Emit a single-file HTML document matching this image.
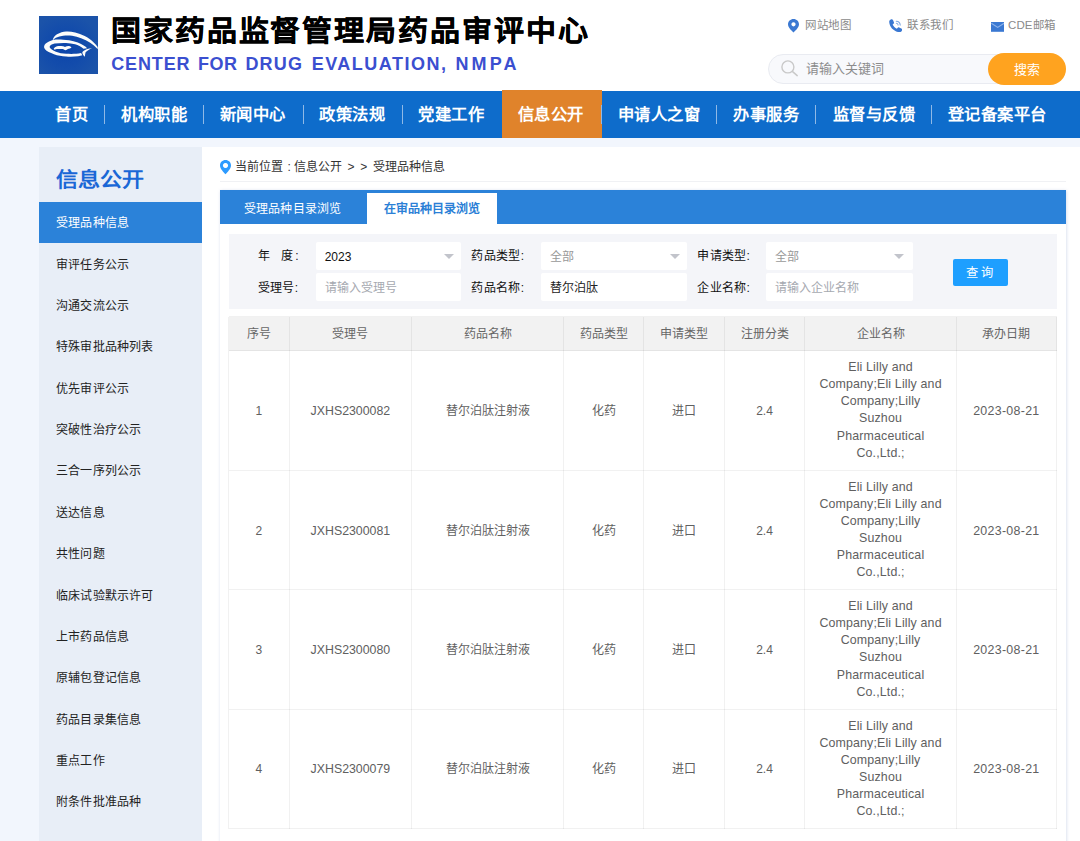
<!DOCTYPE html>
<html lang="zh-CN">
<head>
<meta charset="utf-8">
<title>CDE</title>
<style>
*{margin:0;padding:0;box-sizing:border-box;}
html,body{width:1080px;height:841px;overflow:hidden;}
body{position:relative;background:#f2f6fd;font-family:"Liberation Sans",sans-serif;font-size:12px;color:#333;}
.abs{position:absolute;white-space:nowrap;}
#hdr{position:absolute;left:0;top:0;width:1080px;height:91px;background:#fff;}
#logo{position:absolute;left:39px;top:16px;width:59px;height:58px;background:#1a50a8;}
#t1{left:111px;top:9.5px;font-size:30px;line-height:44px;font-weight:bold;color:#000;letter-spacing:1.9px;-webkit-text-stroke:0.4px #000;transform:scale(1,0.95);transform-origin:0 7.5px;}
#t2{left:111px;top:52.2px;font-size:18px;line-height:24px;font-weight:bold;color:#3b4fd0;letter-spacing:1.55px;word-spacing:4.2px;}
.tl{font-size:11.5px;letter-spacing:0.5px;line-height:16px;color:#8a8a8a;top:17px;}
#sbox{position:absolute;left:768px;top:54px;width:296px;height:30px;border-radius:15px;background:#f8f9fc;border:1px solid #e9ebf1;}
#sbtn{position:absolute;left:988px;top:53px;width:78px;height:32px;border-radius:16px;background:#ffa31f;color:#fff;font-size:13px;line-height:34px;text-align:center;}
#sph{left:806px;top:59.5px;font-size:13px;line-height:18px;color:#8c8c8c;}
#nav{position:absolute;left:0;top:91px;width:1080px;height:47px;background:#0e6ccb;}
.ni{position:absolute;top:0;height:47px;line-height:47px;font-size:16.3px;letter-spacing:0.5px;font-weight:bold;color:#fff;white-space:nowrap;}
.ns{position:absolute;top:14px;width:1px;height:19px;background:#8fb9e6;}
#nact{position:absolute;left:502px;top:-1px;width:99.5px;height:48px;background:#e0832b;}
#side{position:absolute;left:39px;top:147px;width:163px;height:694px;background:#e8eef7;}
#stitle{left:17px;top:17px;font-size:22px;line-height:32px;font-weight:bold;color:#1a67d6;transform:scale(1,0.91);transform-origin:0 26px;}
#sact{position:absolute;left:0;top:54.5px;width:163px;height:41.3px;background:#2b82d9;}
.si{left:17px;font-size:12px;letter-spacing:0.17px;line-height:16px;color:#222;}
#main{position:absolute;left:202px;top:147px;width:878px;height:694px;background:#fff;}

#bc{left:33px;top:12px;font-size:12px;line-height:16px;color:#333;}
#bcl{position:absolute;left:18px;top:33.5px;width:846px;height:1px;background:#f0f1f4;}
#panel{position:absolute;left:18px;top:43px;width:846px;height:670px;background:#fff;box-shadow:0 0 3px 0.5px rgba(150,168,210,0.42);}
#tabs{position:absolute;left:18px;top:43px;width:846px;height:34px;background:#2b82d9;}
#tab1{left:42px;top:54px;font-size:12px;letter-spacing:0.15px;line-height:16px;color:#fff;}
#tabw{position:absolute;left:165px;top:46px;width:130px;height:31px;background:#fff;}
#tab2{left:181.5px;top:54px;font-size:12px;letter-spacing:0.05px;line-height:16px;color:#2b7fd6;font-weight:bold;}
#filt{position:absolute;left:26.5px;top:86.5px;width:828px;height:75px;background:#f4f5f9;}
.inp{position:absolute;width:147px;height:27.6px;background:#fff;border-radius:2px;}
.lb{font-size:12px;letter-spacing:0.35px;line-height:16px;color:#111;}
.iv{font-size:12px;line-height:16px;}
.arr{position:absolute;width:0;height:0;border-left:5px solid transparent;border-right:5px solid transparent;border-top:5px solid #c2c4cb;}
#qbtn{position:absolute;left:751px;top:112px;width:54.8px;height:27px;background:#1e9fff;border-radius:2px;color:#fff;font-size:12.3px;line-height:29.6px;text-align:center;letter-spacing:2.6px;text-indent:0.6px;}
#thead{position:absolute;left:26.5px;top:169.5px;width:828px;height:34.5px;background:#f2f2f2;}
.vl{position:absolute;top:169.5px;width:1px;height:512px;background:rgba(0,0,0,0.055);}
.hl{position:absolute;left:26.5px;width:828px;height:1px;background:rgba(0,0,0,0.055);}
.th{position:absolute;top:179.3px;font-size:12px;line-height:16px;color:#666;text-align:center;white-space:nowrap;}
.td{position:absolute;font-size:12px;line-height:16px;color:#606060;text-align:center;white-space:nowrap;}
.co{position:absolute;font-size:12.4px;letter-spacing:0.15px;line-height:17.1px;color:#606060;text-align:center;white-space:nowrap;}
</style>
</head>
<body>
<div id="hdr">
  <div id="logo"><svg width="70" height="58" viewBox="0 0 70 57.5" style="position:absolute;left:0;top:0;overflow:visible">
<defs><radialGradient id="lg" cx="45%" cy="55%" r="60%"><stop offset="0" stop-color="#0c45aa"/><stop offset="0.55" stop-color="#134cab"/><stop offset="1" stop-color="#1b53a9"/></radialGradient><filter id="hb" x="-20%" y="-20%" width="140%" height="140%"><feGaussia<g clip-path="url(#lc)"><g filter="url(#hb)" fill="#0636a6" stroke="#0636a6" stroke-width="2.6" opacity="0.85"><ellipse cx="26.5" cy="32.3" rx="17" ry="6"/>
<path d="M13.7,23.5 C14.5,21 16,19.2 18,18 C21,16.2 24,15.4 27.1,15.2 C30,15 33,15.4 36.1,16.2 C39.5,17 42.5,18.2 45.7,19.8 C49,21.5 51.8,23.6 54.2,25.8 C56,27.4 57.5,29 58.7,30.7 L58.7,33 C58.4,32.6 58.1,32.2 57.8,31.9 C55.8,29.8 53.6,28 51.2,26.4 C48.4,24.6 45.4,23.1 42.1,21.9 C39.2,20.8 36.2,19.9 33.1,19.5 C30.1,19.2 27.1,19.2 24.1,19.5 C21.6,19.9 19.2,20.6 16.9,21.6 C15.8,22.1 14.9,22.8 14.1,23.8 Z"/>
<path d="M13.8,23.7 C17,23.3 20.5,23.3 24.1,23.5 C26,23.6 28,23.7 30.1,24 C33,24.5 36,25.3 38.8,26.3 C41,27.2 43.2,28.3 45.1,29.5 C46.2,30.2 47.2,31 48.1,31.9 L44.5,32.6 C42,30.4 39.2,29 36.1,28 C33.2,27.2 30.2,26.8 27.1,26.7 C23.2,26.6 19.3,26.7 15.6,27.3 C13.5,27.8 11.6,28.7 10.8,30 C10.5,30.5 10.6,30.9 10.8,31.3 C11.8,33 14,34.4 16.9,35.5 C20,36.7 23.5,37.3 27.1,37.6 C30.5,37.8 34,37.8 37.3,37.6 C39,37.4 40.6,37.1 42.1,36.7 L43.3,39.1 C42,39.5 40.6,39.8 39.1,40 C35.2,40.5 31.2,40.6 27.1,40.3 C22.8,40 18.8,39.3 15,37.9 C11.2,36.6 7.6,35 6,33 C5.2,32 4.9,31 5.1,30 C5.5,28 7.5,26.3 10,25.2 C11.2,24.6 12.5,24 13.8,23.7 Z"/>
<path d="M53.2,32.1 C51.5,32.2 49.7,32.4 48.1,32.8 C46,33.6 44.2,34.7 43.3,36 C43.4,37.8 44.3,39.3 45.9,40.5 C46,38.9 46.1,37.4 46.6,36 C47.4,34.9 48.6,34.1 50,33.4 C51,32.9 52.1,32.5 53.2,32.1 Z"/>
<path d="M14.7,32.6 C15.3,31.3 16.5,30.4 18,30 C20,29.6 22,29.7 24,30 C24.8,30.2 25.4,30.5 25.9,30.8 C27.2,30.1 28.6,29.7 30.1,29.8 C31.2,30 32,30.6 32.5,31.4 C31.4,32 30.2,32.5 28.9,32.8 C28.2,33.5 27.4,34 26.5,34 C25.6,33.7 24.8,33.3 24,32.8 C22,32.6 20,32.6 18,32.8 C17.2,32.9 16.4,33.2 15.6,33.5 Z"/>
</g></g>
nBlur stdDeviation="1.1"/></filter><clipPath id="lc"><rect x="0" y="0" width="58.7" height="57.5"/></clipPath></defs>
<rect x="0" y="0" width="58.7" height="57.5" fill="url(#lg)"/>
<g fill="#fcfcfa">
<path d="M13.7,23.5 C14.5,21 16,19.2 18,18 C21,16.2 24,15.4 27.1,15.2 C30,15 33,15.4 36.1,16.2 C39.5,17 42.5,18.2 45.7,19.8 C49,21.5 51.8,23.6 54.2,25.8 C56,27.4 57.5,29 58.7,30.7 L58.7,33 C58.4,32.6 58.1,32.2 57.8,31.9 C55.8,29.8 53.6,28 51.2,26.4 C48.4,24.6 45.4,23.1 42.1,21.9 C39.2,20.8 36.2,19.9 33.1,19.5 C30.1,19.2 27.1,19.2 24.1,19.5 C21.6,19.9 19.2,20.6 16.9,21.6 C15.8,22.1 14.9,22.8 14.1,23.8 Z"/>
<path d="M13.8,23.7 C17,23.3 20.5,23.3 24.1,23.5 C26,23.6 28,23.7 30.1,24 C33,24.5 36,25.3 38.8,26.3 C41,27.2 43.2,28.3 45.1,29.5 C46.2,30.2 47.2,31 48.1,31.9 L44.5,32.6 C42,30.4 39.2,29 36.1,28 C33.2,27.2 30.2,26.8 27.1,26.7 C23.2,26.6 19.3,26.7 15.6,27.3 C13.5,27.8 11.6,28.7 10.8,30 C10.5,30.5 10.6,30.9 10.8,31.3 C11.8,33 14,34.4 16.9,35.5 C20,36.7 23.5,37.3 27.1,37.6 C30.5,37.8 34,37.8 37.3,37.6 C39,37.4 40.6,37.1 42.1,36.7 L43.3,39.1 C42,39.5 40.6,39.8 39.1,40 C35.2,40.5 31.2,40.6 27.1,40.3 C22.8,40 18.8,39.3 15,37.9 C11.2,36.6 7.6,35 6,33 C5.2,32 4.9,31 5.1,30 C5.5,28 7.5,26.3 10,25.2 C11.2,24.6 12.5,24 13.8,23.7 Z"/>
<path d="M53.2,32.1 C51.5,32.2 49.7,32.4 48.1,32.8 C46,33.6 44.2,34.7 43.3,36 C43.4,37.8 44.3,39.3 45.9,40.5 C46,38.9 46.1,37.4 46.6,36 C47.4,34.9 48.6,34.1 50,33.4 C51,32.9 52.1,32.5 53.2,32.1 Z"/>
<path d="M14.7,32.6 C15.3,31.3 16.5,30.4 18,30 C20,29.6 22,29.7 24,30 C24.8,30.2 25.4,30.5 25.9,30.8 C27.2,30.1 28.6,29.7 30.1,29.8 C31.2,30 32,30.6 32.5,31.4 C31.4,32 30.2,32.5 28.9,32.8 C28.2,33.5 27.4,34 26.5,34 C25.6,33.7 24.8,33.3 24,32.8 C22,32.6 20,32.6 18,32.8 C17.2,32.9 16.4,33.2 15.6,33.5 Z"/>
</g>
</svg></div>
  <div id="t1" class="abs">国家药品监督管理局药品审评中心</div>
  <div id="t2" class="abs" style="left:0;letter-spacing:0;word-spacing:0"><span class="abs" style="left:111.2px;letter-spacing:0.88px">CENTER</span><span class="abs" style="left:197.9px;letter-spacing:0.57px">FOR</span><span class="abs" style="left:245.4px;letter-spacing:1.21px">DRUG</span><span class="abs" style="left:311.7px;letter-spacing:1.49px">EVALUATION,</span><span class="abs" style="left:455.4px;letter-spacing:3.15px">NMPA</span></div>
  <div class="abs tl" style="left:805px">网站地图</div>
  <div class="abs tl" style="left:907px">联系我们</div>
  <div class="abs tl" style="left:1008px;letter-spacing:0.1px">CDE邮箱</div>
  <div id="sbox"></div>
  <svg class="abs" style="left:787.5px;top:18.5px" width="11" height="14" viewBox="0 0 11 14"><path d="M5.5,0 C2.4,0 0,2.4 0,5.3 C0,8.6 3.6,11.6 5.5,13.6 C7.4,11.6 11,8.6 11,5.3 C11,2.4 8.6,0 5.5,0 Z M5.5,3.2 A2.1,2.1 0 1 1 5.49,3.2 Z" fill="#3a78d2" fill-rule="evenodd"/></svg>
  <svg class="abs" style="left:889px;top:19px" width="13.4" height="13.4" viewBox="0 0 13.4 13.4"><path d="M2.2,0.3 C3,0 3.6,0.3 4,1.1 L4.9,3.2 C5.2,3.9 5,4.4 4.4,4.9 L3.6,5.5 C4.5,7.4 6,8.9 7.9,9.8 L8.5,9 C9,8.4 9.5,8.2 10.2,8.5 L12.3,9.4 C13.1,9.8 13.4,10.4 13.1,11.2 C12.6,12.5 11.6,13.3 10.3,13.2 C5,12.8 0.6,8.4 0.2,3.1 C0.1,1.8 0.9,0.8 2.2,0.3 Z" fill="#3a78d2"/><path d="M7.3,2.2 C9.5,2.3 11.1,3.9 11.2,6.1 M7.4,4.3 C8.4,4.4 9,5 9.1,6" stroke="#7fa8e2" stroke-width="1.1" fill="none" stroke-linecap="round"/></svg>
  <svg class="abs" style="left:990.6px;top:21.8px" width="13.4" height="9.8" viewBox="0 0 13.4 9.8"><rect width="13.4" height="9.8" fill="#3a78d2"/><path d="M0.3,1.2 L6.7,5.4 L13.1,1.2" stroke="#8db2ea" stroke-width="1.2" fill="none"/></svg>
  <svg class="abs" style="left:780px;top:58.5px" width="20" height="19" viewBox="0 0 20 19"><circle cx="7.9" cy="7.9" r="6" stroke="#c9c9c9" stroke-width="1.4" fill="none"/><path d="M12.6,12.6 L17.2,16.6" stroke="#c9c9c9" stroke-width="1.5" stroke-linecap="round"/></svg>
  <div id="sph" class="abs">请输入关键词</div>
  <div id="sbtn">搜索</div>
</div>
<div id="nav">
  <div id="nact"></div>
  <div class="ns" style="left:104px"></div>
  <div class="ns" style="left:203px"></div>
  <div class="ns" style="left:303px"></div>
  <div class="ns" style="left:402px"></div>
  <div class="ns" style="left:601px"></div>
  <div class="ns" style="left:716px"></div>
  <div class="ns" style="left:815px"></div>
  <div class="ns" style="left:931px"></div>
  <div class="ni" style="left:55px">首页</div>
  <div class="ni" style="left:121.2px">机构职能</div>
  <div class="ni" style="left:219.5px">新闻中心</div>
  <div class="ni" style="left:319px">政策法规</div>
  <div class="ni" style="left:418px">党建工作</div>
  <div class="ni" style="left:517.5px">信息公开</div>
  <div class="ni" style="left:617.7px">申请人之窗</div>
  <div class="ni" style="left:733px">办事服务</div>
  <div class="ni" style="left:832.5px">监督与反馈</div>
  <div class="ni" style="left:947.7px">登记备案平台</div>
</div>
<div id="side">
  <div id="stitle" class="abs">信息公开</div>
  <div id="sact"></div>
  <div class="abs si" style="top:68.3px;color:#fff">受理品种信息</div>
  <div class="abs si" style="top:109.7px">审评任务公示</div>
  <div class="abs si" style="top:151.0px">沟通交流公示</div>
  <div class="abs si" style="top:192.4px">特殊审批品种列表</div>
  <div class="abs si" style="top:233.7px">优先审评公示</div>
  <div class="abs si" style="top:275.1px">突破性治疗公示</div>
  <div class="abs si" style="top:316.4px">三合一序列公示</div>
  <div class="abs si" style="top:357.7px">送达信息</div>
  <div class="abs si" style="top:399.1px">共性问题</div>
  <div class="abs si" style="top:440.5px">临床试验默示许可</div>
  <div class="abs si" style="top:481.8px">上市药品信息</div>
  <div class="abs si" style="top:523.2px">原辅包登记信息</div>
  <div class="abs si" style="top:564.5px">药品目录集信息</div>
  <div class="abs si" style="top:605.9px">重点工作</div>
  <div class="abs si" style="top:647.2px">附条件批准品种</div>
</div>
<div id="main">
<div id="bcl"></div>
<svg class="abs" style="left:17.8px;top:13px" width="11" height="14.5" viewBox="0 0 11 14.5"><path d="M5.5,0 C2.4,0 0,2.4 0,5.4 C0,8.8 3.6,12 5.5,14.3 C7.4,12 11,8.8 11,5.4 C11,2.4 8.6,0 5.5,0 Z M5.5,2.9 A2.6,2.6 0 1 1 5.49,2.9 Z" fill="#2d9bff" fill-rule="evenodd"/></svg>
<div id="bc" class="abs">当前位置<span style="position:absolute;left:52.5px">:</span><span style="position:absolute;left:58.5px">信息公开</span><span style="position:absolute;left:112.5px">&gt;</span><span style="position:absolute;left:125.3px">&gt;</span><span style="position:absolute;left:138.3px">受理品种信息</span></div>
<div id="panel"></div>
<div id="tabs"></div>
<div id="tabw"></div>
<div id="tab1" class="abs">受理品种目录浏览</div>
<div id="tab2" class="abs">在审品种目录浏览</div>
<div id="filt"></div>
<div class="inp" style="left:113.8px;top:95.4px;width:145.5px"></div>
<div class="inp" style="left:113.8px;top:126.4px;width:145.5px"></div>
<div class="inp" style="left:338.7px;top:95.4px;width:146.7px"></div>
<div class="inp" style="left:338.7px;top:126.4px;width:146.7px"></div>
<div class="inp" style="left:564.0px;top:95.4px;width:146.6px"></div>
<div class="inp" style="left:564.0px;top:126.4px;width:146.6px"></div>
<div class="abs lb" style="left:55.8px;top:101.4px">年<span style="display:inline-block;width:11.3px"></span>度<span style="display:inline-block;width:1.5px"></span>:</div>
<div class="abs lb" style="left:55.8px;top:132.7px">受理号:</div>
<div class="abs lb" style="left:269.3px;top:101.4px">药品类型:</div>
<div class="abs lb" style="left:269.3px;top:132.7px">药品名称:</div>
<div class="abs lb" style="left:495.2px;top:101.4px">申请类型:</div>
<div class="abs lb" style="left:495.2px;top:132.7px">企业名称:</div>
<div class="abs iv" style="left:122.7px;top:101.6px;color:#111">2023</div>
<div class="abs iv" style="left:122.7px;top:132.8px;color:#a6a9b0">请输入受理号</div>
<div class="abs iv" style="left:347.6px;top:101.6px;color:#999">全部</div>
<div class="abs iv" style="left:347.6px;top:132.8px;color:#222">替尔泊肽</div>
<div class="abs iv" style="left:573.4px;top:101.6px;color:#999">全部</div>
<div class="abs iv" style="left:573.4px;top:132.8px;color:#a6a9b0">请输入企业名称</div>
<div class="arr" style="left:241.5px;top:107.0px"></div>
<div class="arr" style="left:467.8px;top:107.0px"></div>
<div class="arr" style="left:692.3px;top:107.0px"></div>
<div id="qbtn">查询</div>
<div id="thead"></div>
<div class="vl" style="left:25.9px"></div>
<div class="vl" style="left:86.8px"></div>
<div class="vl" style="left:209.0px"></div>
<div class="vl" style="left:361.4px"></div>
<div class="vl" style="left:441.4px"></div>
<div class="vl" style="left:521.9px"></div>
<div class="vl" style="left:602.2px"></div>
<div class="vl" style="left:753.9px"></div>
<div class="vl" style="left:853.8px"></div>
<div class="hl" style="top:169.0px"></div>
<div class="hl" style="top:203.0px"></div>
<div class="hl" style="top:322.5px"></div>
<div class="hl" style="top:442.0px"></div>
<div class="hl" style="top:561.5px"></div>
<div class="hl" style="top:680.9px"></div>
<div class="th" style="left:26.4px;width:60.9px">序号</div>
<div class="th" style="left:87.3px;width:122.2px">受理号</div>
<div class="th" style="left:209.5px;width:152.4px">药品名称</div>
<div class="th" style="left:361.9px;width:80.0px">药品类型</div>
<div class="th" style="left:441.9px;width:80.5px">申请类型</div>
<div class="th" style="left:522.4px;width:80.3px">注册分类</div>
<div class="th" style="left:602.7px;width:151.7px">企业名称</div>
<div class="th" style="left:754.4px;width:99.9px">承办日期</div>
<div class="td" style="left:26.4px;width:60.9px;top:255.9px">1</div>
<div class="td" style="left:87.3px;width:122.2px;top:255.9px;font-size:12.35px">JXHS2300082</div>
<div class="td" style="left:209.5px;width:152.4px;top:255.9px">替尔泊肽注射液</div>
<div class="td" style="left:361.9px;width:80.0px;top:255.9px">化药</div>
<div class="td" style="left:441.9px;width:80.5px;top:255.9px">进口</div>
<div class="td" style="left:522.4px;width:80.3px;top:255.9px">2.4</div>
<div class="co" style="left:602.7px;width:151.7px;top:212.2px">Eli Lilly and<br>Company;Eli Lilly and<br>Company;Lilly<br>Suzhou<br>Pharmaceutical<br>Co.,Ltd.;</div>
<div class="td" style="left:754.4px;width:99.9px;top:255.9px;font-size:12.4px;letter-spacing:0.3px">2023-08-21</div>
<div class="td" style="left:26.4px;width:60.9px;top:375.5px">2</div>
<div class="td" style="left:87.3px;width:122.2px;top:375.5px;font-size:12.35px">JXHS2300081</div>
<div class="td" style="left:209.5px;width:152.4px;top:375.5px">替尔泊肽注射液</div>
<div class="td" style="left:361.9px;width:80.0px;top:375.5px">化药</div>
<div class="td" style="left:441.9px;width:80.5px;top:375.5px">进口</div>
<div class="td" style="left:522.4px;width:80.3px;top:375.5px">2.4</div>
<div class="co" style="left:602.7px;width:151.7px;top:331.8px">Eli Lilly and<br>Company;Eli Lilly and<br>Company;Lilly<br>Suzhou<br>Pharmaceutical<br>Co.,Ltd.;</div>
<div class="td" style="left:754.4px;width:99.9px;top:375.5px;font-size:12.4px;letter-spacing:0.3px">2023-08-21</div>
<div class="td" style="left:26.4px;width:60.9px;top:495.0px">3</div>
<div class="td" style="left:87.3px;width:122.2px;top:495.0px;font-size:12.35px">JXHS2300080</div>
<div class="td" style="left:209.5px;width:152.4px;top:495.0px">替尔泊肽注射液</div>
<div class="td" style="left:361.9px;width:80.0px;top:495.0px">化药</div>
<div class="td" style="left:441.9px;width:80.5px;top:495.0px">进口</div>
<div class="td" style="left:522.4px;width:80.3px;top:495.0px">2.4</div>
<div class="co" style="left:602.7px;width:151.7px;top:451.2px">Eli Lilly and<br>Company;Eli Lilly and<br>Company;Lilly<br>Suzhou<br>Pharmaceutical<br>Co.,Ltd.;</div>
<div class="td" style="left:754.4px;width:99.9px;top:495.0px;font-size:12.4px;letter-spacing:0.3px">2023-08-21</div>
<div class="td" style="left:26.4px;width:60.9px;top:614.4px">4</div>
<div class="td" style="left:87.3px;width:122.2px;top:614.4px;font-size:12.35px">JXHS2300079</div>
<div class="td" style="left:209.5px;width:152.4px;top:614.4px">替尔泊肽注射液</div>
<div class="td" style="left:361.9px;width:80.0px;top:614.4px">化药</div>
<div class="td" style="left:441.9px;width:80.5px;top:614.4px">进口</div>
<div class="td" style="left:522.4px;width:80.3px;top:614.4px">2.4</div>
<div class="co" style="left:602.7px;width:151.7px;top:570.7px">Eli Lilly and<br>Company;Eli Lilly and<br>Company;Lilly<br>Suzhou<br>Pharmaceutical<br>Co.,Ltd.;</div>
<div class="td" style="left:754.4px;width:99.9px;top:614.4px;font-size:12.4px;letter-spacing:0.3px">2023-08-21</div>
</div>
</body>
</html>
